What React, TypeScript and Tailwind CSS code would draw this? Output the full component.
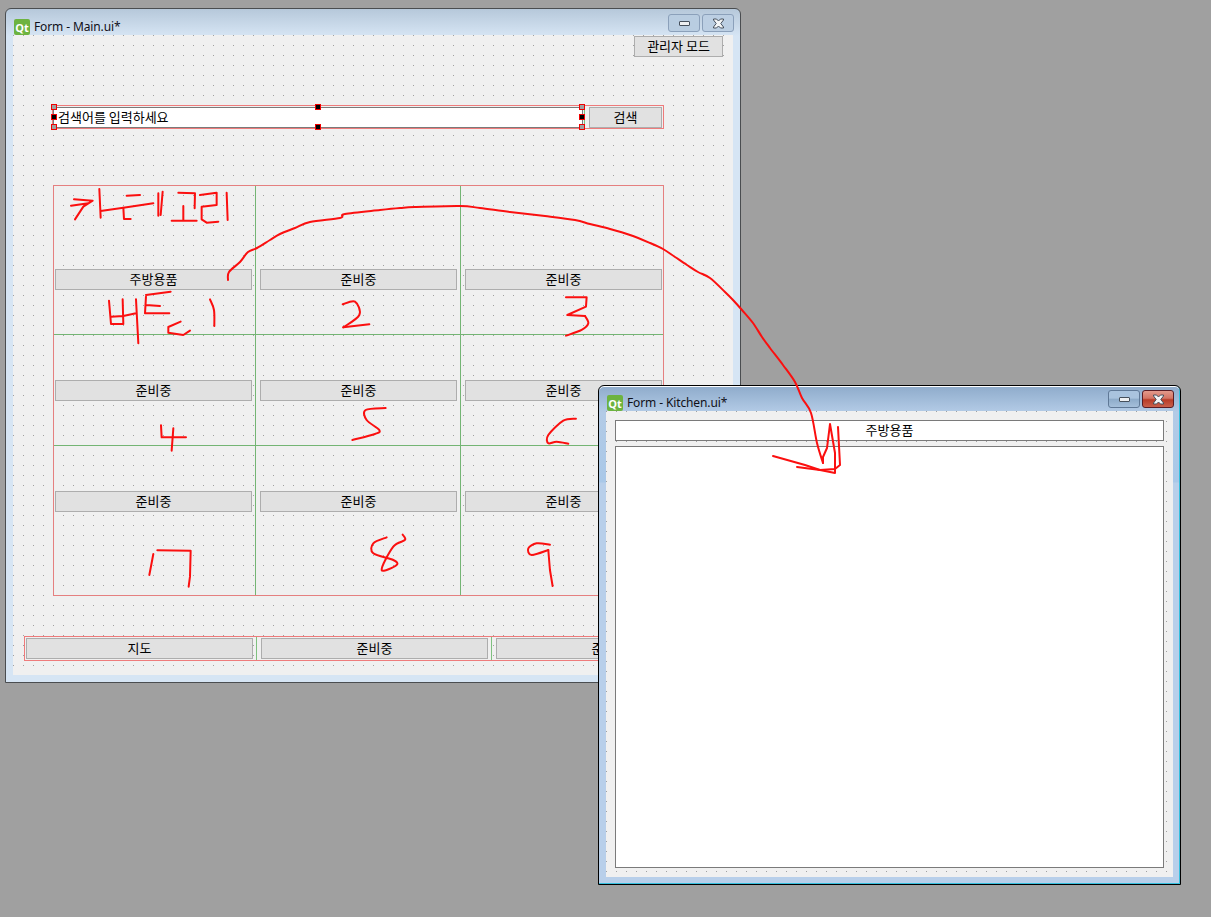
const font = "font-['Noto_Sans_CJK_KR','Noto_Sans',sans-serif]";

const cells = [
  { label: '주방용품', cell: 'pl-px pt-[83px] border-r border-b' },
  { label: '준비중', cell: 'pl-[4px] pt-[83px] border-r border-b' },
  { label: '준비중', cell: 'pl-[4px] pt-[83px] border-b' },
  { label: '준비중', cell: 'pl-px pt-[45px] border-r border-b' },
  { label: '준비중', cell: 'pl-[4px] pt-[45px] border-r border-b' },
  { label: '준비중', cell: 'pl-[4px] pt-[45px] border-b' },
  { label: '준비중', cell: 'pl-px pt-[45px] border-r' },
  { label: '준비중', cell: 'pl-[4px] pt-[45px] border-r' },
  { label: '준비중', cell: 'pl-[4px] pt-[45px]' },
];

const handles = [
  { pos: 'left-[-2px] top-[-2px]', bg: 'bg-[#a0a0a0]' },
  { pos: 'left-[-2px] top-[8px]', bg: 'bg-black' },
  { pos: 'left-[-2px] top-[18px]', bg: 'bg-[#a0a0a0]' },
  { pos: 'left-[262px] top-[-2px]', bg: 'bg-black' },
  { pos: 'left-[262px] top-[18px]', bg: 'bg-black' },
  { pos: 'left-[526px] top-[-2px]', bg: 'bg-[#a0a0a0]' },
  { pos: 'left-[526px] top-[8px]', bg: 'bg-black' },
  { pos: 'left-[526px] top-[18px]', bg: 'bg-[#a0a0a0]' },
];

// catmull-rom through the points, so the pen strokes don't look like polygons
function smooth(pts: number[][]) {
  let d = `M${pts[0][0]} ${pts[0][1]}`;
  for (let i = 0; i < pts.length - 1; i++) {
    const p0 = pts[Math.max(i - 1, 0)];
    const p1 = pts[i];
    const p2 = pts[i + 1];
    const p3 = pts[Math.min(i + 2, pts.length - 1)];
    const c1x = p1[0] + (p2[0] - p0[0]) / 6;
    const c1y = p1[1] + (p2[1] - p0[1]) / 6;
    const c2x = p2[0] - (p3[0] - p1[0]) / 6;
    const c2y = p2[1] - (p3[1] - p1[1]) / 6;
    d += ` C${c1x} ${c1y} ${c2x} ${c2y} ${p2[0]} ${p2[1]}`;
  }
  return d;
}

const arc = [
  [228, 280], [229, 272], [240, 262], [248, 252], [257, 248], [270, 240], [280, 234], [295, 228], [310, 222],
  [340, 218], [345, 214], [380, 210], [400, 208], [415, 207], [460, 206], [480, 208], [510, 212], [545, 216],
  [575, 220], [590, 224], [610, 229], [630, 235], [650, 243], [663, 249], [675, 257], [687, 265], [698, 272],
  [710, 278], [725, 292], [733, 300], [742, 310], [753, 323], [762, 337], [770, 348], [783, 365], [795, 382],
  [802, 398], [811, 413], [817, 443], [823, 463],
];

function QtButton({ label, className }: { label: string; className: string }) {
  return (
    <div
      className={`h-[21px] shrink-0 flex items-center justify-center border border-[#adadad] bg-[#e1e1e1] pb-[2px] text-[13px] leading-none text-black ${font} ${className}`}
    >
      {label}
    </div>
  );
}

function QtLogo() {
  return (
    <div className="w-[16px] h-[16px] shrink-0 rounded-[2px] bg-[#6db33f] flex items-center justify-center text-white text-[11px] font-bold leading-none font-['Open_Sans',sans-serif]">
      Qt
    </div>
  );
}

function CloseGlyph() {
  return (
    <svg width="13" height="11" viewBox="0 0 13 11">
      <path
        d="M1.5 1 H4.5 L6.5 3 L8.5 1 H11.5 V2 L8.8 5.5 L11.5 9 V10 H8.5 L6.5 8 L4.5 10 H1.5 V9 L4.2 5.5 L1.5 2 Z"
        fill="#f2f4f6"
        stroke="#46505c"
        strokeWidth="1"
      />
    </svg>
  );
}

function MinGlyph() {
  return <div className="w-[11px] h-[5px] rounded-[1px] border border-[#46505c] bg-[#eef0f2]" />;
}

function TitleBar({ title, active }: { title: string; active: boolean }) {
  return (
    <div className="h-[25px] flex items-start pl-[8px] pr-[6px] pt-[9px]">
      <QtLogo />
      <span className="ml-[4px] text-[12px] leading-[16px] tracking-[-0.12px] text-[#101018] whitespace-nowrap font-['Noto_Sans',sans-serif]">
        {title}
      </span>
      <div className="ml-auto mt-[-5px] flex gap-[2px]">
        <div
          className={`w-[32px] h-[18px] rounded-[3px] border flex items-center justify-center ${
            active
              ? 'border-[#5f7896] bg-[linear-gradient(#a9c3de,#a9c3de_45%,#8dabc9_50%,#a5bfda)]'
              : 'border-[#8ba0ba] bg-[#b9cde1]'
          }`}
        >
          <MinGlyph />
        </div>
        <div
          className={`w-[32px] h-[18px] rounded-[3px] border flex items-center justify-center ${
            active
              ? 'border-[#5a1c24] bg-[linear-gradient(#e39a8c,#d47464_45%,#b83c28_55%,#c9604c)]'
              : 'border-[#8ba0ba] bg-[#bccfe3]'
          }`}
        >
          <CloseGlyph />
        </div>
      </div>
    </div>
  );
}

function PenMarks() {
  return (
    <svg
      className="absolute inset-0 pointer-events-none"
      width="1211"
      height="917"
      fill="none"
      stroke="#fb0f0f"
      strokeLinecap="round"
      strokeLinejoin="round"
    >
      {/* arc from the first button over to the second window */}
      <g strokeWidth="2">
        <path d={smooth(arc)} />
        <path d="M823 463 L823 457 L827 448 L830 424 L835 453 L835 473 L820 470 L805 465 L773 456" />
        <path d="M838 427 L840 465 L835 469 L820 470 L797 467" />
      </g>
      <g transform="translate(60 185) scale(0.3333)" strokeWidth="6">
        <path d="M42 43 L98 47 L70 65 L45 103 M33 62 L85 55" />
        <path d="M118 12 L122 98 M122 78 L190 68 L280 55" />
        <path d="M200 32 L240 30 M190 68 L192 102 L212 102" />
        <path d="M295 25 L295 92 M308 20 L302 90" />
      </g>
      <g transform="translate(40 180) scale(0.3333)" strokeWidth="6">
        <path d="M415 38 L465 40 L464 85 M430 78 L430 120 M395 122 L470 122" />
        <path d="M480 45 L530 38 L530 75 L485 80 L485 118 L500 128 L535 125 M560 38 L563 120" />
        <path d="M207 362 L213 432 L250 432 L248 358 M213 410 L250 408 L288 400 M288 358 L295 490" />
        <path d="M318 345 L392 335 M318 350 L315 400 L388 400 M318 375 L360 378 M422 425 L385 441 L385 458 L430 465 L450 452" />
        <path d={smooth([[510, 358], [522, 390], [523, 438]])} />
      </g>
      <g transform="translate(280 190) scale(0.3333)" strokeWidth="6">
        <path d={smooth([[188, 343], [225, 335], [238, 375], [190, 412]])} />
        <path d="M190 412 L268 403" />
        <path d="M858 322 L920 322 L918 350 L862 375 L915 378" />
        <path d={smooth([[915, 378], [925, 400], [905, 420], [858, 437]])} />
      </g>
      <g transform="translate(100 400) scale(0.3333)" strokeWidth="6">
        <path d="M183 76 L185 112 L258 112 M220 85 L215 152" />
        <path d={smooth([[857, 24], [797, 30], [800, 60], [838, 90], [825, 102], [757, 120]])} />
        <path d={smooth([[1428, 56], [1390, 62], [1345, 105], [1345, 130], [1370, 125], [1405, 131]])} />
        <path d="M160 462 L148 525 M172 451 L272 452 L270 530 L266 560" />
        <path d={smooth([[908, 404], [915, 420], [880, 440], [845, 510], [890, 495], [880, 480], [820, 460], [820, 430], [860, 412]])} />
        <path d={smooth([[1350, 434], [1310, 430], [1285, 445], [1295, 465], [1345, 450]])} />
        <path d="M1345 450 L1350 510 L1358 558" />
      </g>
    </svg>
  );
}

const dots =
  'bg-[#f0f0f0] bg-[conic-gradient(from_270deg_at_1px_1px,#a0a0a0_90deg,transparent_0)] bg-[size:10px_10px]';

function App() {
  return (
    <div className="relative w-[1211px] h-[917px] overflow-hidden bg-[#a0a0a0]">
      {/* Main.ui */}
      <div className="absolute left-[5px] top-[8px] w-[736px] h-[675px] rounded-t-[6px] border border-[#4a4d50] bg-[linear-gradient(#b6c8da,#d6e5f4_27px)] flex flex-col">
        <div className="pt-px">
          <TitleBar title="Form - Main.ui*" active={false} />
        </div>
        <div className={`mx-[7px] h-[640px] ${dots}`}>
          <div className="pt-px pr-[10px] flex justify-end">
            <QtButton label="관리자 모드" className="w-[89px]" />
          </div>

          <div className="relative mt-[48px] ml-[39px] w-[612px] h-[24px] pt-px border border-[#ee7b7b] flex">
            <div className={`w-[530px] h-[21px] border border-[#7a7a7a] bg-white pl-[4px] text-[13px] leading-[17px] text-black ${font}`}>
              검색어를 입력하세요
            </div>
            <div className="ml-px w-px h-[21px] bg-[#7fc07f]" />
            <QtButton label="검색" className="ml-[4px] w-[73px]" />
            {handles.map((h, i) => (
              <div key={i} className={`absolute w-[6px] h-[6px] border border-[#f00000] ${h.pos} ${h.bg}`} />
            ))}
          </div>

          <div className="mt-[56px] ml-[40px] w-[611px] h-[411px] border border-[#e58080] grid grid-cols-[202px_205px_202px] grid-rows-[149px_111px_149px]">
            {cells.map((c, i) => (
              <div key={i} className={`border-[#74b574] ${c.cell}`}>
                <QtButton label={c.label} className="w-[197px]" />
              </div>
            ))}
          </div>

          <div className="mt-[40px] ml-[11px] w-[701px] h-[25px] border border-[#ee7b7b] flex">
            <div className="w-[232px] pl-px pt-px border-r border-[#7fc07f]">
              <QtButton label="지도" className="w-[227px]" />
            </div>
            <div className="w-[235px] pl-[4px] pt-px border-r border-[#7fc07f]">
              <QtButton label="준비중" className="w-[227px]" />
            </div>
            <div className="pl-[4px] pt-px">
              <QtButton label="준비중" className="w-[227px]" />
            </div>
          </div>
        </div>
      </div>

      {/* Kitchen.ui */}
      <div className="absolute left-[598px] top-[385px] w-[583px] h-[500px] rounded-t-[6px] border border-black shadow-[inset_-1px_-1px_0_#35c0de,inset_0_1px_0_#ffffff] bg-[linear-gradient(#8eabcb,#b3cbe6_26px,#a9c8e8_96px,#b8cfea_97px)] flex flex-col">
        <TitleBar title="Form - Kitchen.ui*" active={true} />
        <div className={`mx-[7px] h-[466px] px-[9px] pt-[9px] pb-[9px] flex flex-col gap-[5px] ${dots}`}>
          <div className={`h-[21px] shrink-0 flex items-center justify-center border border-[#7a7a7a] bg-white pb-[2px] text-[13px] leading-none text-black ${font}`}>
            주방용품
          </div>
          <div className="flex-1 border border-[#7a7a7a] bg-white" />
        </div>
      </div>

      <PenMarks />
    </div>
  );
}

export default App;
